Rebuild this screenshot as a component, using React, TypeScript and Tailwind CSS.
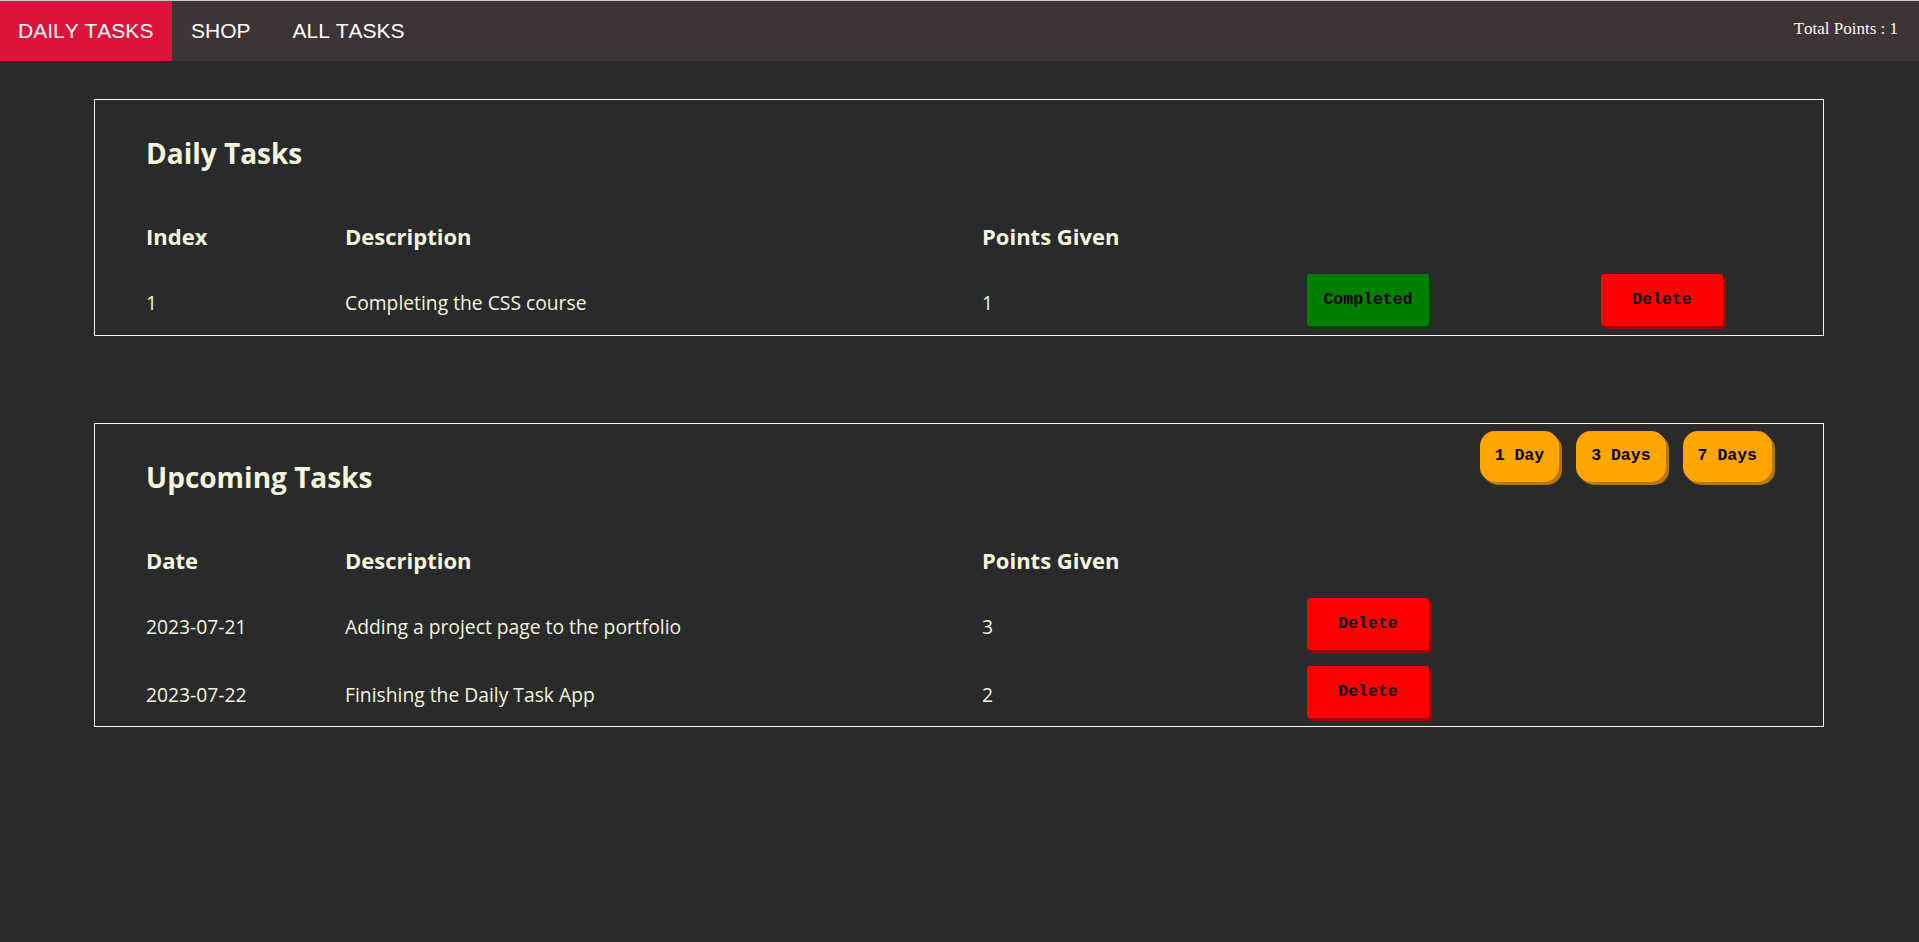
import React from "react";

const sans = "font-['Open_Sans',sans-serif]";
const mono = "font-['Liberation_Mono','Courier_New',monospace]";

function RectBtn({ label, color }: { label: string; color: "green" | "red" }) {
  const cls =
    color === "green"
      ? "bg-[#008000] shadow-[3px_3px_0_#004400]"
      : "bg-[#ff0000] shadow-[3px_3px_0_#a30000]";
  return (
    <button
      className={`${cls} ${mono} w-[122px] h-[52px] rounded-[3px] text-[16.5px] font-bold text-black flex items-center justify-center`}
    >
      {label}
    </button>
  );
}

function DayBtn({ label }: { label: string }) {
  return (
    <button
      className={`${mono} bg-[#ffa500] shadow-[3px_3px_0_#b87800] h-[51px] px-[15px] rounded-[15px] text-[16.5px] font-bold text-black`}
    >
      {label}
    </button>
  );
}

const grid = "grid grid-cols-[199px_637px_325px_294px_1fr] items-center";
const cell = "pt-[6px]";

export default function App() {
  return (
    <div className={`min-h-[942px] bg-[#292a2c] border-t border-[#c9c9c9] ${sans}`}>
      <nav className="h-[60px] bg-[#3e3435] flex items-stretch justify-between font-['Liberation_Sans',Arial,sans-serif] text-[21px] text-white [font-kerning:none]">
        <div className="flex items-stretch">
          <a className="bg-[#dc143c] w-[172px] pl-[18px] flex items-center">DAILY TASKS</a>
          <a className="pl-[19px] flex items-center">SHOP</a>
          <a className="pl-[42px] flex items-center">ALL TASKS</a>
        </div>
        <div className="flex items-center pr-[21px] pb-[4px] font-['Liberation_Serif',serif] text-[17px] text-[#fffbe8]">
          Total Points : 1
        </div>
      </nav>

      <section className="mt-[38px] ml-[94px] w-[1730px] border border-[#f5f5dc] text-[#f5f5dc] pl-[51px] pb-[1px]">
        <div className="h-[106px] flex items-center">
          <h2 className="text-[28px] font-bold">Daily Tasks</h2>
        </div>
        <div className={`${grid} h-[60px] text-[22px] font-bold`}>
          <div>Index</div>
          <div>Description</div>
          <div>Points Given</div>
          <div></div>
          <div></div>
        </div>
        <div className={`${grid} h-[68px] text-[19.3px]`}>
          <div className={cell}>1</div>
          <div className={cell}>Completing the CSS course</div>
          <div className={cell}>1</div>
          <div>
            <RectBtn label="Completed" color="green" />
          </div>
          <div>
            <RectBtn label="Delete" color="red" />
          </div>
        </div>
      </section>

      <section className="mt-[87px] ml-[94px] w-[1730px] border border-[#f5f5dc] text-[#f5f5dc] pl-[51px]">
        <div className="h-[106px] flex justify-between">
          <h2 className="self-center text-[28px] font-bold">Upcoming Tasks</h2>
          <div className="flex gap-[17px] mt-[7px] mr-[51px]">
            <DayBtn label="1 Day" />
            <DayBtn label="3 Days" />
            <DayBtn label="7 Days" />
          </div>
        </div>
        <div className={`${grid} h-[60px] text-[22px] font-bold`}>
          <div>Date</div>
          <div>Description</div>
          <div>Points Given</div>
          <div></div>
          <div></div>
        </div>
        {[
          ["2023-07-21", "Adding a project page to the portfolio", "3"],
          ["2023-07-22", "Finishing the Daily Task App", "2"],
        ].map(([d, desc, p]) => (
          <div key={d} className={`${grid} h-[68px] text-[19.3px]`}>
            <div className={cell}>{d}</div>
            <div className={cell}>{desc}</div>
            <div className={cell}>{p}</div>
            <div>
              <RectBtn label="Delete" color="red" />
            </div>
            <div></div>
          </div>
        ))}
      </section>
    </div>
  );
}
